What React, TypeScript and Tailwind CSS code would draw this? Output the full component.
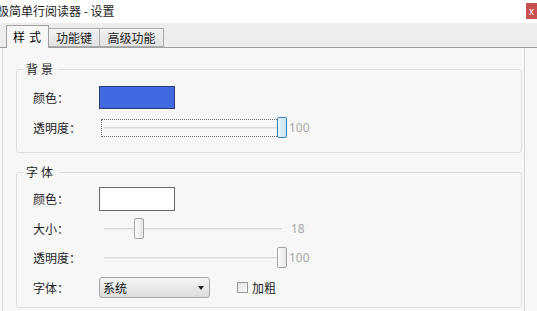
import React from "react";

const font = "font-['Microsoft_YaHei','Noto_Sans_CJK_SC',sans-serif]";

function Slider({ thumb, focused }: { thumb: "min" | "max"; focused?: boolean }) {
  return (
    <div
      className={
        "relative w-[188px] h-[22px] " +
        (focused ? "outline-1 outline-dotted outline-[#6b6b6b] -outline-offset-[3px]" : "")
      }
    >
      <div className="absolute left-[5px] top-[10px] w-[178px] h-[2px] bg-[#d9d9d9] border-b border-[#ececec]" />
      <div
        className={
          "absolute top-0 w-[10px] h-[21px] rounded-[2px] border " +
          (thumb === "max" ? "left-[178px] " : "left-[35px] ") +
          (focused
            ? "border-[#3c7fb1] bg-gradient-to-r from-[#e5f4fc] to-[#c4e5f6]"
            : "border-[#a3a3a3] bg-gradient-to-r from-[#fdfdfd] to-[#e6e6e6]")
        }
      />
    </div>
  );
}

function Group({ title, children, cls }: { title: string; children: React.ReactNode; cls: string }) {
  return (
    <div className={"relative border border-[#dddddd] rounded-[3px] pl-[16px] flex flex-col " + cls}>
      <span className="absolute -top-[9px] left-[7px] bg-[#f7f7f7] px-[2px] text-[12px] leading-[16px] tracking-[3px] text-[#1e1e1e]">
        {title}
      </span>
      {children}
    </div>
  );
}

function Row({ label, h, children }: { label: string; h: string; children: React.ReactNode }) {
  return (
    <div className={"flex items-center " + h}>
      <span className="w-[66px] text-[12px] text-[#1e1e1e]">{label}</span>
      {children}
    </div>
  );
}

export default function App() {
  return (
    <div className={"w-[537px] h-[311px] overflow-hidden bg-[#f7f7f7] flex flex-col " + font}>
      <div className="h-[23px] bg-white flex justify-between shrink-0">
        <span className="-ml-[3px] mt-[2px] text-[12px] leading-[17px] text-[#1a1a1a]">极简单行阅读器 - 设置</span>
        <div className="mt-[3px] w-[11px] h-[16px] bg-[#c75050] text-white text-[10px] leading-[15px] pl-[3px] overflow-hidden">
          x
        </div>
      </div>
      <div className="h-[25px] bg-[#ededed] border-b border-[#a0a0a0] flex items-end pl-[6px] shrink-0">
        <div className="h-[23px] w-[43px] -mb-px bg-[#f7f7f7] border border-b-0 border-[#a0a0a0] flex items-center justify-center text-[12px] tracking-[4px] pl-[3px]">
          样式
        </div>
        <div className="h-[19px] w-[51px] bg-gradient-to-b from-[#f2f2f2] to-[#e2e2e2] border border-l-0 border-[#acacac] flex items-center justify-center text-[12px] text-[#222]">
          功能键
        </div>
        <div className="h-[19px] w-[64px] bg-gradient-to-b from-[#f2f2f2] to-[#e2e2e2] border border-l-0 border-[#acacac] flex items-center justify-center text-[12px] text-[#222]">
          高级功能
        </div>
      </div>
      <div className="flex-1 ml-[2px] mr-[12px] border-l border-r border-[#d6d6d6] pl-[13px] pr-[2px] pt-[21px] flex flex-col gap-[19px]">
        <Group title="背景" cls="h-[84px] pt-[16px] gap-[8px]">
          <Row label="颜色：" h="h-[23px]">
            <div className="w-[76px] h-[23px] bg-[#4169e1] border border-[#2c3c6e]" />
          </Row>
          <Row label="透明度：" h="h-[22px]">
            <Slider thumb="max" focused />
            <span className="ml-[2px] text-[12px] text-[#a8a8a8] font-['Noto_Sans',sans-serif]">100</span>
          </Row>
        </Group>
        <Group title="字体" cls="h-[136px] pt-[14px] gap-[7px]">
          <Row label="颜色：" h="h-[24px]">
            <div className="w-[76px] h-[24px] bg-white border border-[#6a6a6a]" />
          </Row>
          <Row label="大小：" h="h-[22px]">
            <Slider thumb="min" />
            <span className="ml-[4px] text-[12px] text-[#a8a8a8] font-['Noto_Sans',sans-serif]">18</span>
          </Row>
          <Row label="透明度：" h="h-[22px]">
            <Slider thumb="max" />
            <span className="ml-[2px] text-[12px] text-[#a8a8a8] font-['Noto_Sans',sans-serif]">100</span>
          </Row>
          <Row label="字体：" h="h-[21px] mt-[1px]">
            <div className="w-[111px] h-[21px] rounded-[3px] border border-[#a5a5a5] bg-gradient-to-b from-[#f6f6f6] to-[#dcdcdc] flex items-center justify-between pl-[3px] pr-[5px] text-[12px] text-[#111]">
              <span>系统</span>
              <span className="w-0 h-0 border-l-[3px] border-r-[3px] border-t-[4px] border-l-transparent border-r-transparent border-t-[#222]" />
            </div>
            <div className="ml-[27px] w-[11px] h-[11px] border border-[#9a9a9a] bg-gradient-to-br from-[#e4e4e4] to-[#fafafa]" />
            <span className="ml-[4px] text-[12px] text-[#1e1e1e]">加粗</span>
          </Row>
        </Group>
      </div>
    </div>
  );
}
